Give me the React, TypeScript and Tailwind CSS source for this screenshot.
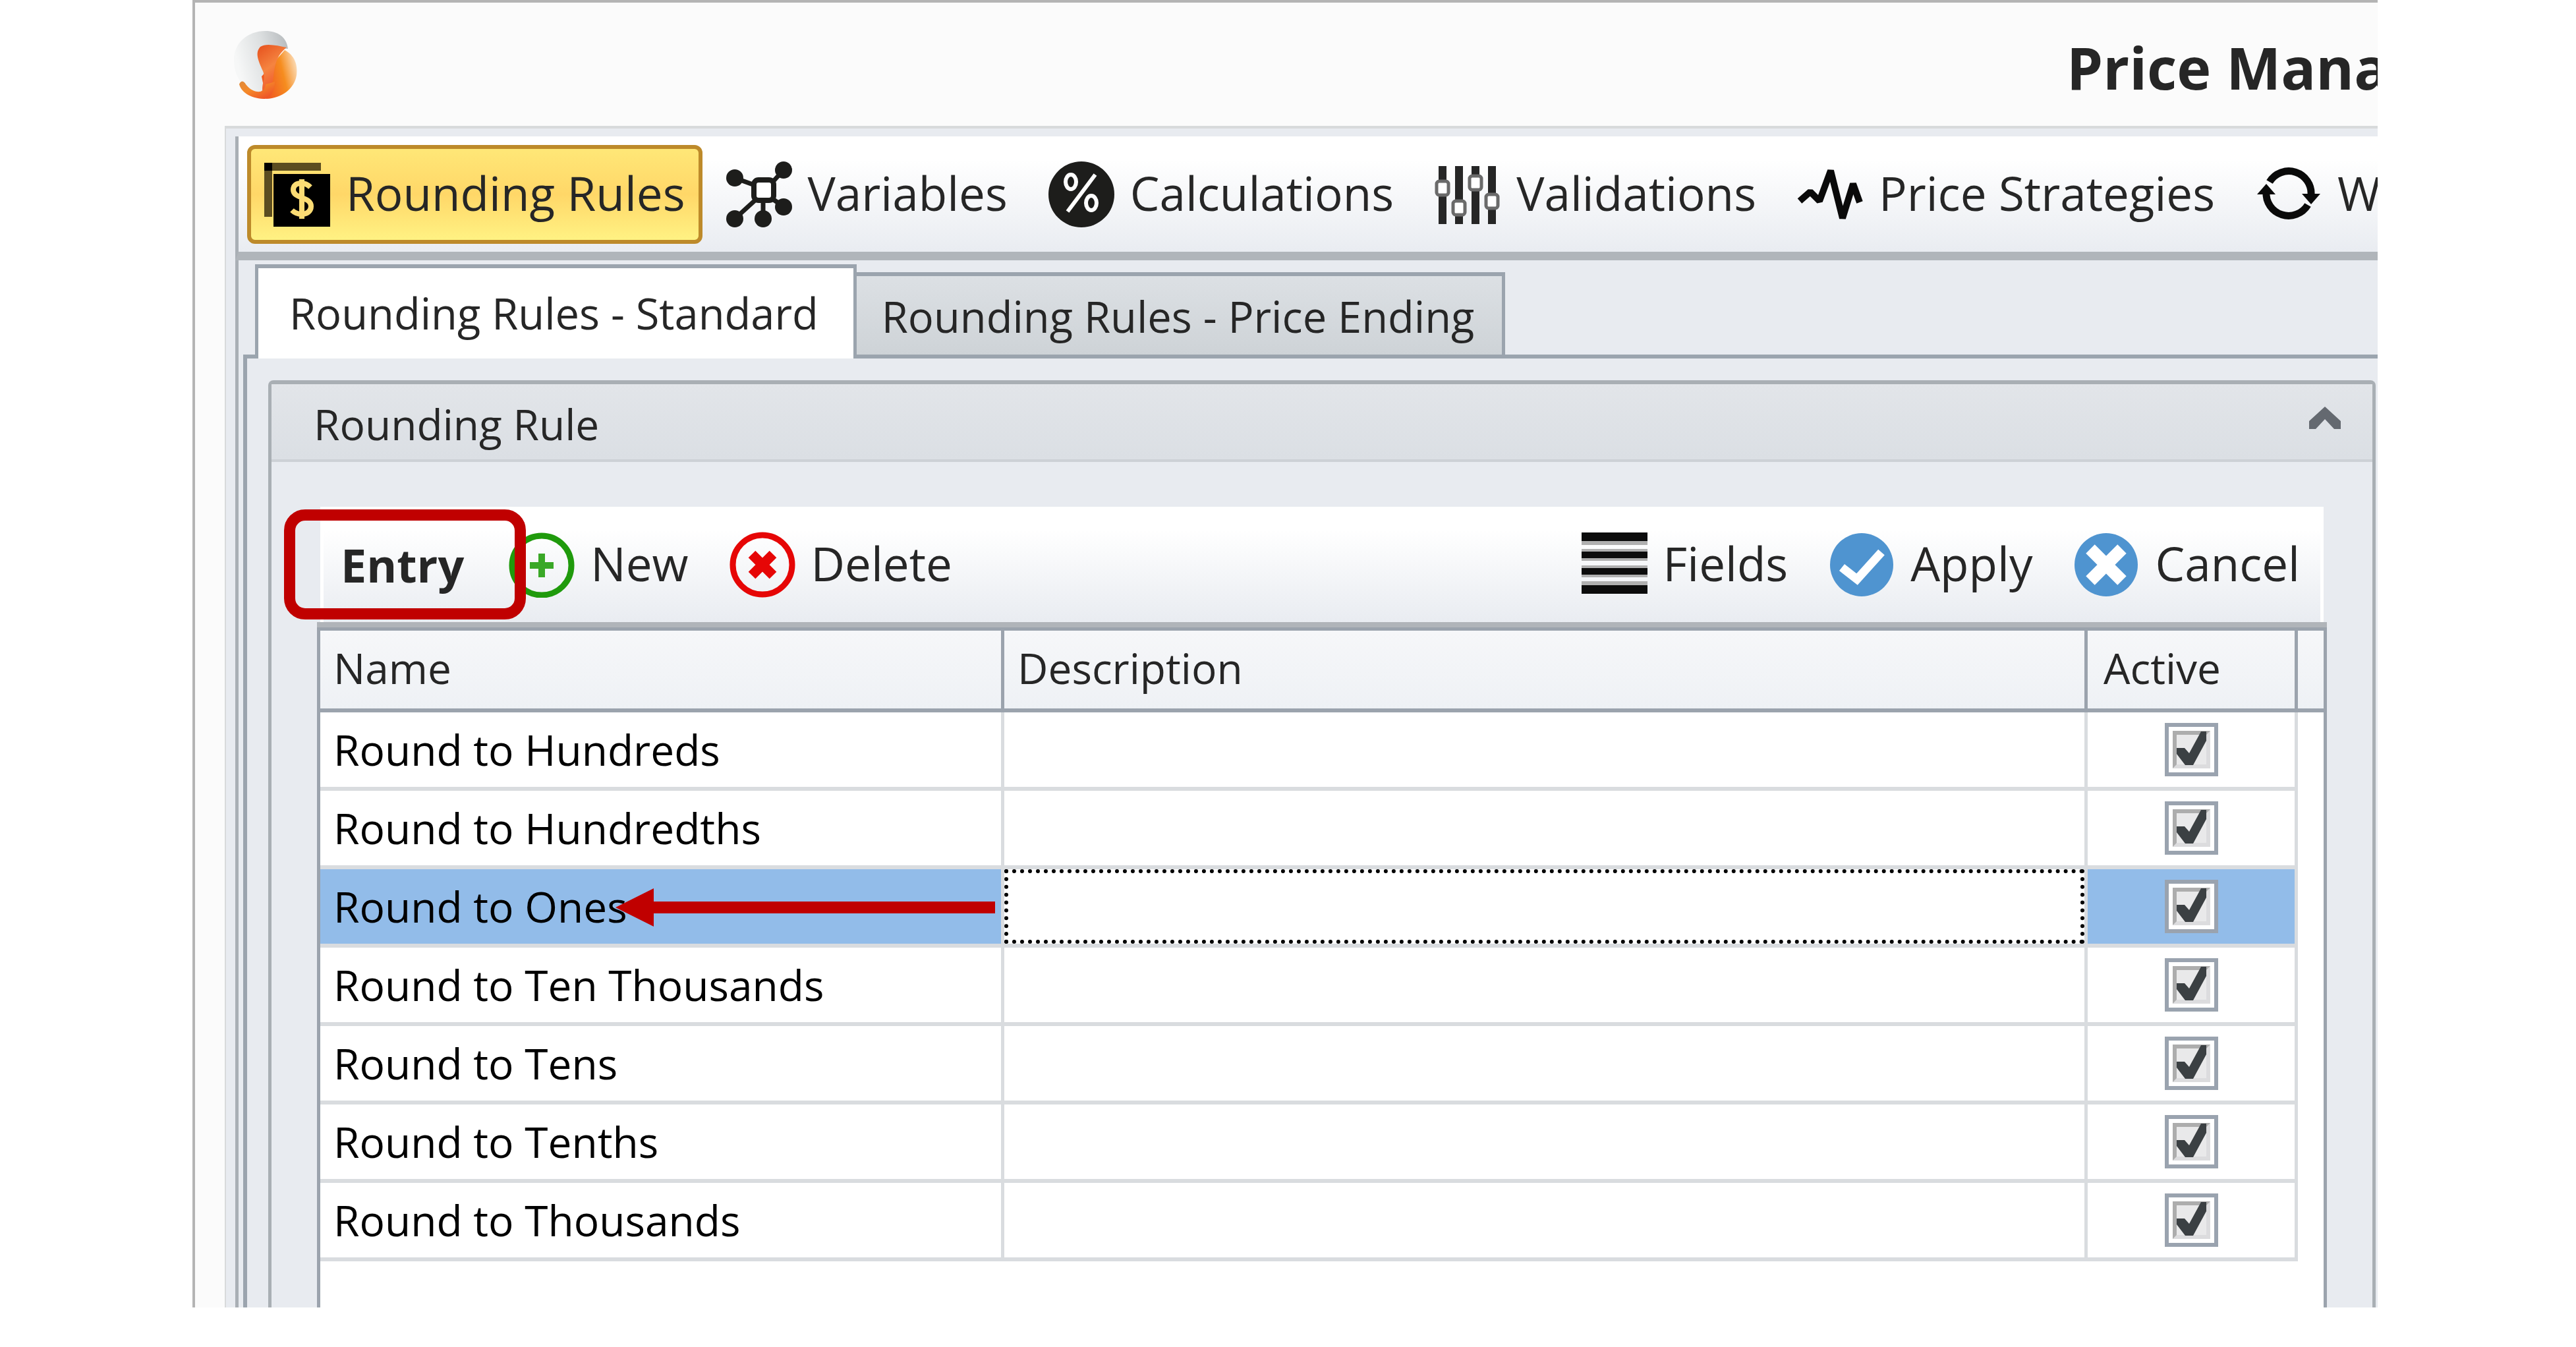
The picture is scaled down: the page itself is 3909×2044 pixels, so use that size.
import { useState, type ReactNode } from "react";

const svgProps = { viewBox: "0 0 100 100", className: "size-[100px] shrink-0", "aria-hidden": true } as const;

function LogoIcon() {
  return (
    <svg viewBox="0 0 100 104" className="h-[104px] w-[100px] shrink-0" role="img" aria-label="Application logo">
      <defs>
        <linearGradient id="logoGrey" x1="0" y1="0.3" x2="1" y2="0">
          <stop offset="0" stopColor="#f6f7f7" />
          <stop offset="0.5" stopColor="#dcdfe0" />
          <stop offset="1" stopColor="#b3b7ba" />
        </linearGradient>
        <linearGradient id="logoFold" x1="0" y1="0" x2="0.4" y2="1">
          <stop offset="0" stopColor="#e64f1c" />
          <stop offset="0.5" stopColor="#f58440" />
          <stop offset="1" stopColor="#ee4a26" />
        </linearGradient>
        <linearGradient id="logoFlame" x1="0.1" y1="0.6" x2="1" y2="0.3">
          <stop offset="0" stopColor="#f05a22" />
          <stop offset="0.55" stopColor="#f68d1f" />
          <stop offset="1" stopColor="#fbdcb8" />
        </linearGradient>
        <linearGradient id="logoTail" x1="0" y1="0" x2="1" y2="1">
          <stop offset="0" stopColor="#e08a3a" />
          <stop offset="0.4" stopColor="#f58a2a" />
          <stop offset="1" stopColor="#ec4427" />
        </linearGradient>
      </defs>
      <path d="M50 1C22 1 2 20 2 44c0 14 4 28 12 36 8 12 20 18 30 14 10-8 8-24 2-38-4-14-6-26 6-32 10-2 20 4 32 4C82 10 68 1 50 1Z" fill="url(#logoGrey)" />
      <path d="M79 30c15 8 20 22 18 38-3 20-22 35-46 36L44 70Z" fill="url(#logoFlame)" />
      <path d="M82 26C66 38 64 54 62 70c-2 14-8 28-14 34C40 80 52 78 46 62 38 44 34 34 42 25c8-6 26-2 40 1Z" fill="url(#logoFold)" />
      <path d="M10 82c2-6 7-6 10 0 6 8 14 12 22 11 5-2 8-6 8-11l14-4c0 14-6 22-14 26-20 0-36-8-40-22Z" fill="url(#logoTail)" />
    </svg>
  );
}

function RoundingIcon() {
  return (
    <svg {...svgProps}>
      <path d="M0 2h86v12H12v70H0Z" fill="#5c4d20" />
      <path d="M0 2h12v12H0Z" fill="#000" />
      <path d="M14 19h86v80H14Z" fill="#000" />
      <path d="M70 39c-4-4-8-6-14-6-8 0-12 4-12 10 0 14 27 10 27 25 0 8-7 12-14 12s-11-2-15-6M57 27v60" fill="none" stroke="#fbdc74" strokeWidth="8" />
    </svg>
  );
}

function VariablesIcon() {
  return (
    <svg {...svgProps}>
      <g stroke="#1d1d1b" strokeWidth="7" fill="none">
        <path d="M13 25 46 37M88 12 66 36M66 54 88 69M47 56 13 87M56 58v28" />
        <rect x="42" y="28" width="30" height="31" rx="7" fill="#fff" strokeWidth="8" />
      </g>
      <g fill="#1d1d1b">
        <circle cx="13" cy="25" r="13" />
        <circle cx="87" cy="13" r="13" />
        <circle cx="87" cy="69" r="13" />
        <circle cx="13" cy="87" r="13" />
        <circle cx="56" cy="87" r="13" />
      </g>
    </svg>
  );
}

function PercentIcon() {
  return (
    <svg {...svgProps}>
      <circle cx="50" cy="50" r="50" fill="#1d1d1b" />
      <g fill="none" stroke="#fff" strokeWidth="6">
        <ellipse cx="34" cy="31" rx="8" ry="11" />
        <ellipse cx="65" cy="63" rx="8" ry="11" />
        <path d="M71 20 29 76" />
      </g>
    </svg>
  );
}

function SlidersIcon() {
  return (
    <svg {...svgProps}>
      <g stroke="#262626" strokeWidth="12">
        <path d="M12 7v88M37 7v88M62 7v88M87 7v88" />
      </g>
      <g fill="#fff" stroke="#6a6a6a" strokeWidth="5">
        <rect x="3" y="30" width="18" height="21" rx="4" />
        <rect x="28" y="60" width="18" height="21" rx="4" />
        <rect x="53" y="22" width="18" height="21" rx="4" />
        <rect x="78" y="50" width="18" height="21" rx="4" />
      </g>
    </svg>
  );
}

function PulseIcon() {
  return (
    <svg {...svgProps}>
      <path d="M4 60 20 46 34 60 51 14 69 86 85 34 95 62" fill="none" stroke="#0a0a0a" strokeWidth="10" strokeLinejoin="bevel" />
    </svg>
  );
}

function SyncIcon() {
  return (
    <svg {...svgProps}>
      <g fill="none" stroke="#0a0a0a" strokeWidth="11">
        <path d="M21 31a34 34 0 0 1 63 20" />
        <path d="M79 66a34 34 0 0 1-63-20" />
      </g>
      <path d="M70 49h28L84 65ZM2 50h28L16 34Z" fill="#0a0a0a" />
    </svg>
  );
}

function NewIcon() {
  return (
    <svg {...svgProps}>
      <circle cx="50" cy="51" r="45" fill="none" stroke="#1f9a0c" strokeWidth="9" />
      <path d="M50 33v36M32 51h36" stroke="#3aa827" strokeWidth="10" />
    </svg>
  );
}

function DeleteIcon() {
  return (
    <svg {...svgProps}>
      <circle cx="50" cy="50" r="45" fill="none" stroke="#e60606" strokeWidth="9" />
      <path d="m34 34 32 32M66 34 34 66" stroke="#e60606" strokeWidth="15" />
    </svg>
  );
}

function FieldsIcon() {
  return (
    <svg {...svgProps}>
      <path d="M0 1h100v13H0ZM0 30h100v10H0ZM0 55h100v10H0ZM0 81h100v13H0Z" fill="#0c0c0c" />
      <path d="M0 14h100v6H0ZM0 26h100v4H0ZM0 40h100v4H0ZM0 51h100v4H0ZM0 65h100v4H0ZM0 75h100v6H0Z" fill="#b0b0b0" />
    </svg>
  );
}

function ApplyIcon() {
  return (
    <svg {...svgProps}>
      <circle cx="50" cy="50" r="48" fill="#4f94d0" />
      <path d="M20 54 43 72 80 31" fill="none" stroke="#fff" strokeWidth="13" />
    </svg>
  );
}

function CancelIcon() {
  return (
    <svg {...svgProps}>
      <circle cx="50" cy="50" r="48" fill="#4f94d0" />
      <path d="m26 26 48 48M74 26 26 74" stroke="#fff" strokeWidth="19" />
    </svg>
  );
}

function ToolButton({ icon, label, selected = false }: { icon: ReactNode; label: string; selected?: boolean }) {
  return (
    <button
      type="button"
      className={
        selected
          ? "flex h-[150px] shrink-0 items-center gap-6 rounded-xl border-[6px] border-[#bd8a2a] bg-linear-to-b from-[#ffe777] via-[#ffd768] to-[#fff283] px-5 text-[71px] leading-none whitespace-nowrap text-[#262626]"
          : "flex h-[150px] shrink-0 items-center gap-6 border-[6px] border-transparent px-5 text-[71px] leading-none whitespace-nowrap text-[#262626]"
      }
    >
      {icon}
      <span className="pb-1">{label}</span>
    </button>
  );
}

function CheckBox({ label }: { label: string }) {
  const [checked, setChecked] = useState(true);
  return (
    <label className="relative mx-auto block size-[81px]">
      <input
        type="checkbox"
        aria-label={label}
        checked={checked}
        onChange={() => setChecked(!checked)}
        className="block size-full appearance-none border-[6px] border-[#9aa3af] bg-white"
      />
      <span className="pointer-events-none absolute inset-[12px] border-[6px] border-t-[#adadad] border-r-[#dcdcde] border-b-[#dcdcde] border-l-[#adadad] bg-[#e9e9ea]" />
      {checked && (
        <svg viewBox="0 0 81 81" className="pointer-events-none absolute inset-0" aria-hidden="true">
          <path d="M18 38h12l7 8L55 13h8v14L43 64H31L18 47Z" fill="#3b4043" />
        </svg>
      )}
    </label>
  );
}

const rows = [
  "Round to Hundreds",
  "Round to Hundredths",
  "Round to Ones",
  "Round to Ten Thousands",
  "Round to Tens",
  "Round to Tenths",
  "Round to Thousands",
];

const selectedRow = "Round to Ones";

export default function App() {
  return (
    <main className="flex h-screen min-h-[1800px] bg-white pr-[301px] pb-[60px] pl-[292px] font-['Open_Sans',sans-serif] text-[64px] leading-none text-[#262626]">
      <div className="flex min-w-0 flex-1 flex-col overflow-hidden border-t-4 border-l-4 border-[#b4b4b4] bg-[#fbfbfb]">
        <header className="flex h-[187px] shrink-0 items-center justify-between pl-[57px]">
          <LogoIcon />
          <h1 className="w-[472px] overflow-hidden pt-2 text-[88px] leading-[120px] font-bold whitespace-nowrap">Price Mana</h1>
        </header>

        <div className="ml-[45px] flex min-h-0 flex-1 flex-col border-t-4 border-l-2 border-[#d8dadb] bg-[#e8ebf0] pt-3 pl-[14px]">
          <nav
            aria-label="Sections"
            className="flex h-[188px] shrink-0 items-center gap-[10px] overflow-hidden border-b-[13px] border-l-[5px] border-b-[#b0b5ba] border-l-[#a9afb5] bg-linear-to-b from-white from-20% to-[#e9ecf1] pl-[13px]"
          >
            <ToolButton icon={<RoundingIcon />} label="Rounding Rules" selected />
            <ToolButton icon={<VariablesIcon />} label="Variables" />
            <ToolButton icon={<PercentIcon />} label="Calculations" />
            <ToolButton icon={<SlidersIcon />} label="Validations" />
            <ToolButton icon={<PulseIcon />} label="Price Strategies" />
            <ToolButton icon={<SyncIcon />} label="W" />
          </nav>

          <div className="flex min-h-0 flex-1 flex-col border-l-[5px] border-[#a9afb5] pt-[6px] pl-[7px]">
            <div role="tablist" className="relative -mb-[6px] flex shrink-0 items-end pl-[18px] text-[65px] leading-none">
              <button
                type="button"
                role="tab"
                aria-selected="true"
                className="h-[143px] border-x-[5px] border-t-[6px] border-[#9ba4ae] bg-white pr-[53px] pl-[47px] whitespace-nowrap"
              >
                Rounding Rules - Standard
              </button>
              <button
                type="button"
                role="tab"
                aria-selected="false"
                className="h-[131px] border-y-[6px] border-r-[5px] border-[#9ba4ae] bg-linear-to-b from-[#dce0e4] to-[#ced3d7] pr-[42px] pl-[38px] pt-1 whitespace-nowrap"
              >
                Rounding Rules - Price Ending
              </button>
            </div>

            <div role="tabpanel" className="flex min-h-0 flex-1 flex-col border-t-[6px] border-l-[6px] border-[#9ba4ae] pt-[33px] pr-[3px] pl-8">
              <section className="flex min-h-0 flex-1 flex-col rounded-t-lg border-x-[5px] border-t-[6px] border-[#a9afb4]">
                <div className="flex h-[118px] shrink-0 items-center justify-between border-b-4 border-[#cdd1d6] bg-linear-to-b from-[#e2e5e9] to-[#dbdfe4] pr-[48px] pl-[64px]">
                  <h2 className="pt-2">Rounding Rule</h2>
                  <button type="button" aria-label="Collapse">
                    <svg viewBox="0 0 48 34" className="mb-3 h-[34px] w-[48px]" aria-hidden="true">
                      <path d="M24 0 48 22v12H38L24 19 10 34H0V22Z" fill="#646970" />
                    </svg>
                  </button>
                </div>

                <div className="flex min-h-0 flex-1 flex-col px-[69px] pt-[68px]">
                  <div className="mx-[5px] flex h-[175px] shrink-0 items-center gap-[10px] border-x-[5px] border-white bg-linear-to-b from-white from-20% to-[#e9ecf1] pr-[5px]">
                    <div className="relative z-10 pr-[32px] pl-[26px] text-[70px] leading-none font-bold">
                      Entry
                      <span className="pointer-events-none absolute -top-[49px] -left-[60px] h-[167px] w-[367px] rounded-[32px] border-[17px] border-[#c00000]" />
                    </div>
                    <ToolButton icon={<NewIcon />} label="New" />
                    <ToolButton icon={<DeleteIcon />} label="Delete" />
                    <div className="ml-auto flex gap-[10px]">
                      <ToolButton icon={<FieldsIcon />} label="Fields" />
                      <ToolButton icon={<ApplyIcon />} label="Apply" />
                      <ToolButton icon={<CancelIcon />} label="Cancel" />
                    </div>
                  </div>

                  <div className="h-2 shrink-0 bg-[#b0b4b9]" />
                  <div className="min-h-0 flex-1 border-x-[5px] border-t-[5px] border-[#9ba3ad] bg-white">
                    <table className="w-full table-fixed border-separate border-spacing-0 text-left">
                      <colgroup>
                        <col className="w-[1038px]" />
                        <col />
                        <col className="w-[319px]" />
                        <col className="w-[39px]" />
                      </colgroup>
                      <thead>
                        <tr className="h-[124px] bg-linear-to-b from-[#f6f7f9] to-[#eef1f5]">
                          <th scope="col" className="border-r-[5px] border-b-[6px] border-[#9ba3ad] px-[20px] pb-1 font-normal">Name</th>
                          <th scope="col" className="border-r-[5px] border-b-[6px] border-[#9ba3ad] px-[20px] pb-1 font-normal">Description</th>
                          <th scope="col" className="border-r-[5px] border-b-[6px] border-[#9ba3ad] px-[24px] pb-1 font-normal">Active</th>
                          <td className="border-b-[6px] border-[#9ba3ad]" />
                        </tr>
                      </thead>
                      <tbody className="text-black">
                        {rows.map((name) => {
                          const selected = name === selectedRow;
                          return (
                            <tr key={name} className="h-[119px]">
                              <td className={selected ? "relative border-r-[5px] border-b-[6px] border-[#d9dcdf] bg-[#92bce9] px-[20px] whitespace-nowrap" : "border-r-[5px] border-b-[6px] border-[#d9dcdf] px-[20px] whitespace-nowrap"}>
                                {name}
                                {selected && (
                                  <svg viewBox="0 0 576 58" className="pointer-events-none absolute top-[29px] right-[9px] h-[58px] w-[576px]" aria-hidden="true">
                                    <path d="M0 29 58 0v20h518v18H58v20Z" fill="#c00000" />
                                  </svg>
                                )}
                              </td>
                              <td className="border-r-[5px] border-b-[6px] border-[#d9dcdf] p-0">
                                {selected && (
                                  <input type="text" aria-label="Description" className="block h-[113px] w-full border-[6px] border-dotted border-black bg-white px-[14px] outline-none" />
                                )}
                              </td>
                              <td className={selected ? "border-r-[5px] border-b-[6px] border-[#d9dcdf] bg-[#92bce9] p-0" : "border-r-[5px] border-b-[6px] border-[#d9dcdf] p-0"}>
                                <CheckBox label={name + " active"} />
                              </td>
                              <td />
                            </tr>
                          );
                        })}
                      </tbody>
                    </table>
                  </div>
                </div>
              </section>
            </div>
          </div>
        </div>
      </div>
    </main>
  );
}
